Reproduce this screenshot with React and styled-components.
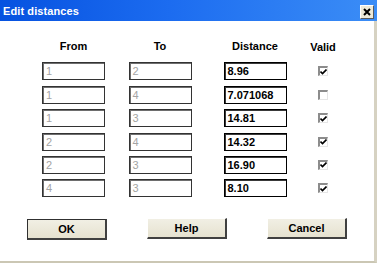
import React from "react";
import styled, {createGlobalStyle} from "styled-components";

const GlobalStyle = createGlobalStyle`
    html, body {
        margin: 0;
        padding: 0;
        background: #ffffff;
    }
    body {
        font-family: "Liberation Sans", Arial, sans-serif;
        font-size: 11px;
    }
`

const Window = styled.div`
    width: 377px;
    height: 263px;
    display: flex;
    flex-direction: column;
    overflow: hidden;
`
const TitleBar = styled.div`
    height: 21px;
    display: flex;
    align-items: center;
    justify-content: space-between;
    padding: 0 3px 0 3px;
    background: linear-gradient(to right, #0652e0 0%, #1c6cf0 45%, #3b8df6 100%);
`
const Title = styled.div`
    color: #ffffff;
    font-weight: bold;
    font-size: 11px;
    letter-spacing: 0.1px;
`
const CloseButton = styled.div`
    width: 14px;
    height: 14px;
    display: flex;
    align-items: center;
    justify-content: center;
    background: #ece9d8;
    border-top: 1px solid #ffffff;
    border-left: 1px solid #ffffff;
    border-right: 1px solid #5a5a5a;
    border-bottom: 1px solid #5a5a5a;
    box-sizing: border-box;
    margin-top: 3px;
`
const Body = styled.div`
    flex: 1;
    display: flex;
    flex-direction: column;
    background: #ffffff;
    border-right: 3px solid #d6d2c2;
    border-bottom: 2px solid #cbc7b4;
`
const Grid = styled.div`
    display: grid;
    grid-template-columns: 63px 110px 80px 56px;
    justify-items: center;
    align-items: center;
    row-gap: 5.4px;
    padding: 17px 0 0 42px;
`
const Header = styled.div`
    font-weight: bold;
    color: #000000;
    line-height: 13px;
    padding-top: ${p => p.$drop || 0}px;
    margin-bottom: 3px;
`
const Field = styled.div`
    width: 63px;
    height: 18px;
    box-sizing: border-box;
    padding: 2px 0 0 3px;
    line-height: 13px;
    background: #ffffff;
    border: 1px solid ${p => p.$active ? "#000000" : "#333333"};
    box-shadow: inset 1px 1px 0 ${p => p.$active ? "#3a3a3a" : "#6e6e6e"};
    color: ${p => p.$active ? "#000000" : "#a4a4a4"};
    font-weight: ${p => p.$active ? "bold" : "normal"};
`
const Check = styled.div`
    width: 10px;
    height: 10px;
    box-sizing: border-box;
    border-top: 2px solid #8c8c8c;
    border-left: 2px solid #8c8c8c;
    border-right: 1px solid #e6e6e6;
    border-bottom: 1px solid #e6e6e6;
    display: flex;
    align-items: center;
    justify-content: center;
    margin-right: 1px;
`
const ButtonRow = styled.div`
    display: flex;
    gap: 40px;
    padding: 22px 0 0 27px;
`
const Button = styled.div`
    width: 80px;
    height: 21px;
    box-sizing: border-box;
    display: flex;
    align-items: center;
    justify-content: center;
    background: linear-gradient(to bottom, #f1efe4, #e6e2d0);
    font-weight: bold;
    color: #000000;
    border-top: 1px solid ${p => p.$default ? "#303030" : "#ffffff"};
    border-left: 1px solid ${p => p.$default ? "#303030" : "#ffffff"};
    border-right: 2px solid #404040;
    border-bottom: 2px solid #404040;
    margin-top: ${p => p.$default ? 0 : -1}px;
`

const rows = [
    {from: "1", to: "2", distance: "8.96", valid: true},
    {from: "1", to: "4", distance: "7.071068", valid: false},
    {from: "1", to: "3", distance: "14.81", valid: true},
    {from: "2", to: "4", distance: "14.32", valid: true},
    {from: "2", to: "3", distance: "16.90", valid: true},
    {from: "4", to: "3", distance: "8.10", valid: true},
]

function CheckBox({checked}) {
    return (
        <Check>
            {checked && <svg width="7" height="6" viewBox="0 0 7 6">
                <path d="M0.5 2.5 L2.5 4.5 L6.5 0.5" stroke="#000" strokeWidth="1.6" fill="none"/>
            </svg>}
        </Check>
    )
}

export default function App() {
    return (
        <Window>
            <GlobalStyle/>
            <TitleBar>
                <Title>Edit distances</Title>
                <CloseButton>
                    <svg width="8" height="8" viewBox="0 0 8 8">
                        <path d="M1 1 L7 7 M7 1 L1 7" stroke="#000" strokeWidth="2"/>
                    </svg>
                </CloseButton>
            </TitleBar>
            <Body>
                <Grid>
                    <Header>From</Header>
                    <Header>To</Header>
                    <Header>Distance</Header>
                    <Header $drop={3}>Valid</Header>
                    {rows.map((r, i) => <React.Fragment key={i}>
                        <Field>{r.from}</Field>
                        <Field>{r.to}</Field>
                        <Field $active>{r.distance}</Field>
                        <CheckBox checked={r.valid}/>
                    </React.Fragment>)}
                </Grid>
                <ButtonRow>
                    <Button $default>OK</Button>
                    <Button>Help</Button>
                    <Button>Cancel</Button>
                </ButtonRow>
            </Body>
        </Window>
    );
}
